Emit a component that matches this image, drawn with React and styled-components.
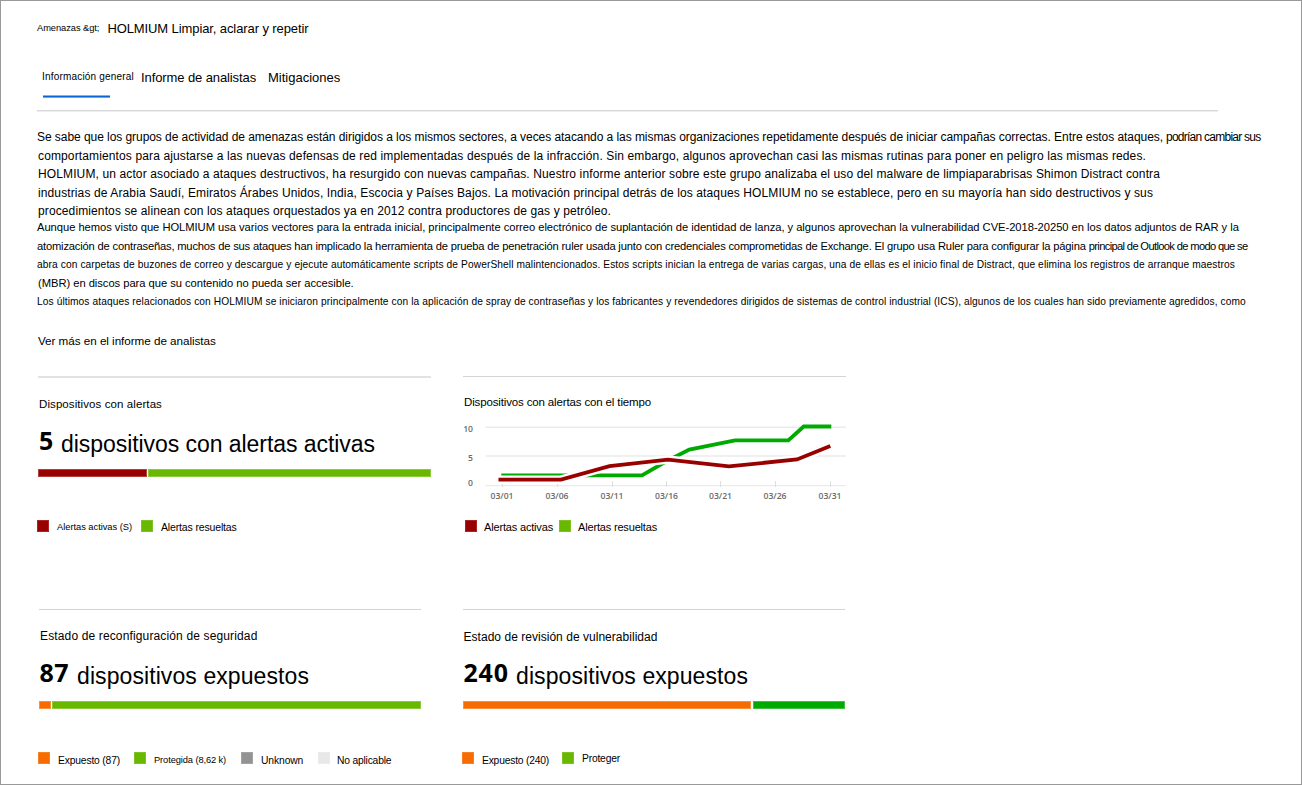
import React from "react";
import styled, { createGlobalStyle } from "styled-components";

const Global = createGlobalStyle`
  *, *::before, *::after { box-sizing: border-box; }
  body { margin: 0; background: #fff; }
`;

const Page = styled.main`
  width: 1302px;
  height: 785px;
  border: 1px solid #999;
  background: #fff;
  color: #000;
  font-family: "Liberation Sans", Arial, sans-serif;
  overflow: hidden;
`;

const Label = styled.span`
  display: block;
  flex: none;
  font-size: ${(p) => p.$size}px;
  letter-spacing: ${(p) => p.$track || 0}px;
  line-height: 20px;
  white-space: nowrap;
  margin-top: ${(p) => p.$drop || 0}px;
`;

const Breadcrumb = styled.header`
  display: flex;
  height: 48px;
  padding: 17px 0 0 36px;
  gap: 8px;
`;

const Tabs = styled.nav`
  display: flex;
  height: 61px;
  margin: 0 84px 0 36px;
  padding: 18px 0 0 5px;
`;

const Tab = styled.a`
  display: flex;
  flex-direction: column;
  width: ${(p) => p.$width}px;
`;

const Underline = styled.i`
  width: 67px;
  height: 3px;
  margin: 8px 0 0 1px;
  background: linear-gradient(#7fb3ea 0 1px, #0a66d0 1px 2px, #6aa6e6 2px 3px);
`;

const Divider = styled.hr`
  width: 1181px;
  height: 2px;
  margin: 0 0 0 36px;
  border: 0;
  background: linear-gradient(#d8d8d8 50%, #eee 50%);
`;

const Article = styled.section`
  padding: 15px 0 0 36px;
  height: 219px;
`;

const Paragraph = styled.p`
  display: flex;
  gap: 3px;
  margin: 0;
  padding-left: ${(p) => p.$indent || 0}px;
  height: ${(p) => p.$height}px;
`;

const MoreLink = styled.a`
  display: block;
  height: 45px;
  padding-left: 37px;
`;

const Cards = styled.section`
  display: grid;
  grid-template-columns: 425px 383px;
  grid-template-rows: 233px 170px;
  margin-left: 37px;
`;

const Card = styled.article`
  display: flex;
  flex-direction: column;
  width: ${(p) => p.$width}px;
  margin-left: ${(p) => p.$inset || 0}px;
`;

const CardRule = styled.hr`
  width: 100%;
  height: ${(p) => p.$weight || 1}px;
  flex: none;
  margin: 0;
  border: 0;
  background: ${(p) => (p.$weight ? "#e2e2e2" : "#d4d4d4")};
`;

const CardTitle = styled.h2`
  margin: 0;
  padding-left: ${(p) => p.$indent || 0}px;
  padding-top: ${(p) => p.$top}px;
  height: ${(p) => p.$height}px;
  font-weight: 400;
`;

const Stat = styled.div`
  display: flex;
  height: ${(p) => p.$height}px;
  padding-left: ${(p) => p.$indent || 0}px;
`;

const Count = styled.strong`
  width: ${(p) => p.$width}px;
  font: 700 25px/30px "Open Sans", "Noto Sans", sans-serif;
  letter-spacing: ${(p) => p.$track || 0}px;
`;

const StatText = styled.span`
  font-size: 23px;
  line-height: 30px;
  letter-spacing: ${(p) => p.$track}px;
  margin-top: ${(p) => p.$drop}px;
  white-space: nowrap;
`;

const Bar = styled.div`
  display: flex;
  gap: ${(p) => p.$gap || 1}px;
  height: 8px;
`;

const Segment = styled.div`
  flex: ${(p) => (p.$width ? `0 0 ${p.$width}px` : "1")};
  background: ${(p) => p.$color};
  box-shadow: inset 0 0 0 1px rgba(255, 255, 255, 0.25);
`;

const Legend = styled.ul`
  display: flex;
  margin: ${(p) => p.$top}px 0 0 ${(p) => p.$shift || 0}px;
  padding: 0;
  list-style: none;
`;

const LegendItem = styled.li`
  display: flex;
  flex: none;
  gap: ${(p) => p.$gap || 8}px;
  width: ${(p) => p.$width}px;
`;

const Swatch = styled.i`
  width: 12px;
  height: 12px;
  background: ${(p) => p.$color};
  box-shadow: inset 0 0 0 1px rgba(255, 255, 255, 0.15);
`;

const Chart = styled.svg`
  display: block;
  height: 96px;
  font: 600 8.6px "Open Sans", "Noto Sans", sans-serif;
  fill: #6a6a6a;
`;

const RED = "#990000";
const LIME = "#68b800";
const GREEN = "#00aa00";
const ORANGE = "#f76c00";

const report = [
  { height: 19, parts: [[12, -0.0583, "Se sabe que los grupos de actividad de amenazas están dirigidos a los mismos sectores, a veces atacando a las mismas organizaciones repetidamente después de iniciar campañas correctas. Entre estos ataques,"], [12, -0.75, "podrían cambiar sus"]] },
  { height: 18, indent: 1, parts: [[12, 0.1269, "comportamientos para ajustarse a las nuevas defensas de red implementadas después de la infracción. Sin embargo, algunos aprovechan casi las mismas rutinas para poner en peligro las mismas redes."]] },
  { height: 19, indent: 1, parts: [[12, 0.1218, "HOLMIUM, un actor asociado a ataques destructivos, ha resurgido con nuevas campañas. Nuestro informe anterior sobre este grupo analizaba el uso del malware de limpiaparabrisas Shimon Distract contra"]] },
  { height: 18, indent: 1, parts: [[12, 0.1156, "industrias de Arabia Saudí, Emiratos Árabes Unidos, India, Escocia y Países Bajos. La motivación principal detrás de los ataques HOLMIUM no se establece, pero en su mayoría han sido destructivos y sus"]] },
  { height: 16, indent: 1, parts: [[12, 0.1175, "procedimientos se alinean con los ataques orquestados ya en 2012 contra productores de gas y petróleo."]] },
  { height: 19, parts: [[11.2, -0.038, "Aunque hemos visto que HOLMIUM usa varios vectores para la entrada inicial, principalmente correo electrónico de suplantación de identidad de lanza, y algunos aprovechan la vulnerabilidad CVE-2018-20250 en los datos adjuntos de RAR y la"]] },
  { height: 19, parts: [[11.2, -0.1886, "atomización de contraseñas, muchos de sus ataques han implicado la herramienta de prueba de penetración ruler usada junto con credenciales comprometidas de Exchange. El grupo usa Ruler para configurar la página"], [11.2, -0.668, "principal de Outlook de modo que se"]] },
  { height: 18, parts: [[10.2, 0.1015, "abra con carpetas de buzones de correo y descargue y ejecute automáticamente scripts de PowerShell malintencionados. Estos scripts inician la entrega de varias cargas, una de ellas es el inicio final de Distract, que elimina los registros de arranque maestros"]] },
  { height: 19, indent: 1, parts: [[11.2, -0.035, "(MBR) en discos para que su contenido no pueda ser accesible."]] },
  { height: 20, parts: [[10.2, 0.094, "Los últimos ataques relacionados con HOLMIUM se iniciaron principalmente con la aplicación de spray de contraseñas y los fabricantes y revendedores dirigidos de sistemas de control industrial (ICS), algunos de los cuales han sido previamente agredidos, como"]] },
];

const dates = [
  [502, "03/01"], [557, "03/06"], [612, "03/11"], [666.5, "03/16"],
  [720.5, "03/21"], [775, "03/26"], [830, "03/31"],
];

function AlertsChart() {
  const active = "498.5,479.7 561,479.7 609.5,466.2 668,459.6 729,466.4 797,459.4 830.3,446";
  const resolved = "501.3,475.3 642,475.3 665,462 689.3,449.6 735,440.3 788.3,440.3 803.7,426.5 831.3,426.5";
  return (
    <Chart width="383" height="96" viewBox="463 412 383 96">
      <path d="M485.5 427.3H846M485.5 456H846M485.5 485.6H846" stroke="#ebebeb" strokeWidth="1.4" />
      <g stroke="#dedede">
        {dates.map(([x]) => <path key={x} d={`M${Math.floor(x)}.5 481V487`} />)}
      </g>
      <g textAnchor="end">
        <text x="473" y="432">10</text>
        <text x="473" y="461">5</text>
        <text x="473" y="486">0</text>
      </g>
      <g textAnchor="middle">
        {dates.map(([x, d]) => <text key={d} x={x} y="499">{d}</text>)}
      </g>
      <g fill="none">
        <polyline points={resolved} stroke={GREEN} strokeWidth="3.8" />
        <polyline points={active} stroke="#fff" strokeWidth="8.5" />
        <polyline points={active} stroke={RED} strokeWidth="3.8" />
      </g>
    </Chart>
  );
}

function Key({ color, width, gap, size, track, drop, children }) {
  return (
    <LegendItem $width={width} $gap={gap}>
      <Swatch $color={color} />
      <Label $size={size} $track={track} $drop={drop}>{children}</Label>
    </LegendItem>
  );
}

export default function App() {
  return (
    <Page>
      <Global />
      <Breadcrumb>
        <Label $size={9.3} $track={-0.05}>{"Amenazas &gt;"}</Label>
        <Label $size={13} $track={-0.1} $drop={1}>HOLMIUM Limpiar, aclarar y repetir</Label>
      </Breadcrumb>
      <Tabs>
        <Tab $width={99}>
          <Label $size={10} $track={0.19}>Información general</Label>
          <Underline />
        </Tab>
        <Tab $width={127}>
          <Label $size={13} $track={-0.1} $drop={1}>Informe de analistas</Label>
        </Tab>
        <Tab $width={80}>
          <Label $size={13} $track={0} $drop={1}>Mitigaciones</Label>
        </Tab>
      </Tabs>
      <Divider />
      <Article>
        {report.map((line, i) => (
          <Paragraph key={i} $height={line.height} $indent={line.indent}>
            {line.parts.map(([size, track, text]) => (
              <Label key={text} $size={size} $track={track}>{text}</Label>
            ))}
          </Paragraph>
        ))}
      </Article>
      <MoreLink>
        <Label $size={11.7} $track={-0.044}>Ver más en el informe de analistas</Label>
      </MoreLink>
      <Cards>
        <Card $width={393}>
          <CardRule $weight={2} />
          <CardTitle $top={16} $height={47} $indent={1}>
            <Label $size={11.5} $track={0.09}>Dispositivos con alertas</Label>
          </CardTitle>
          <Stat $height={44} $indent={1}>
            <Count $width={22}>5</Count>
            <StatText $track={-0.055} $drop={4}>dispositivos con alertas activas</StatText>
          </Stat>
          <Bar $gap={1.5}>
            <Segment $width={108.5} $color={RED} />
            <Segment $color={LIME} />
          </Bar>
          <Legend $top={43} $shift={-1}>
            <Key color={RED} width={104} size={9.3} track={-0.02} drop={-3}>Alertas activas (S)</Key>
            <Key color={LIME} width={100} size={10.5} track={-0.15} drop={-3}>Alertas resueltas</Key>
          </Legend>
        </Card>
        <Card $width={383}>
          <CardRule />
          <CardTitle $top={15} $height={35} $indent={1}>
            <Label $size={11.5} $track={-0.142}>Dispositivos con alertas con el tiempo</Label>
          </CardTitle>
          <AlertsChart />
          <Legend $top={12} $shift={2}>
            <Key color={RED} width={94} gap={7} size={11} track={-0.17} drop={-3}>Alertas activas</Key>
            <Key color={LIME} width={100} gap={7} size={11} track={-0.17} drop={-3}>Alertas resueltas</Key>
          </Legend>
        </Card>
        <Card $width={382} $inset={1}>
          <CardRule />
          <CardTitle $top={16} $height={47} $indent={1}>
            <Label $size={12} $track={0.14}>Estado de reconfiguración de seguridad</Label>
          </CardTitle>
          <Stat $height={44} $indent={0.5}>
            <Count $width={37.5} $track={0.5}>87</Count>
            <StatText $track={0.085} $drop={4}>dispositivos expuestos</StatText>
          </Stat>
          <Bar $gap={1}>
            <Segment $width={12} $color={ORANGE} />
            <Segment $color={LIME} />
          </Bar>
          <Legend $top={43} $shift={-1}>
            <Key color={ORANGE} width={96} size={10.3} track={-0.16} drop={-1}>Expuesto (87)</Key>
            <Key color={LIME} width={107} size={9.3} track={-0.1} drop={-2}>Protegida (8,62 k)</Key>
            <Key color="#939393" width={77} size={10.3} track={-0.1} drop={-1}>Unknown</Key>
            <Key color="#e8e8e8" width={80} gap={7} size={10.3} track={-0.2} drop={-1}>No aplicable</Key>
          </Legend>
        </Card>
        <Card $width={382}>
          <CardRule />
          <CardTitle $top={17} $height={47} $indent={0.5}>
            <Label $size={12} $track={0.033}>Estado de revisión de vulnerabilidad</Label>
          </CardTitle>
          <Stat $height={44} $indent={0.5}>
            <Count $width={52.5} $track={0.8}>240</Count>
            <StatText $track={0.085} $drop={4}>dispositivos expuestos</StatText>
          </Stat>
          <Bar $gap={2}>
            <Segment $width={288} $color={ORANGE} />
            <Segment $color={GREEN} />
          </Bar>
          <Legend $top={43} $shift={-1}>
            <Key color={ORANGE} width={100} size={10.3} track={-0.2} drop={-1}>Expuesto (240)</Key>
            <Key color={LIME} width={80} size={10.3} track={-0.19} drop={-3}>Proteger</Key>
          </Legend>
        </Card>
      </Cards>
    </Page>
  );
}
